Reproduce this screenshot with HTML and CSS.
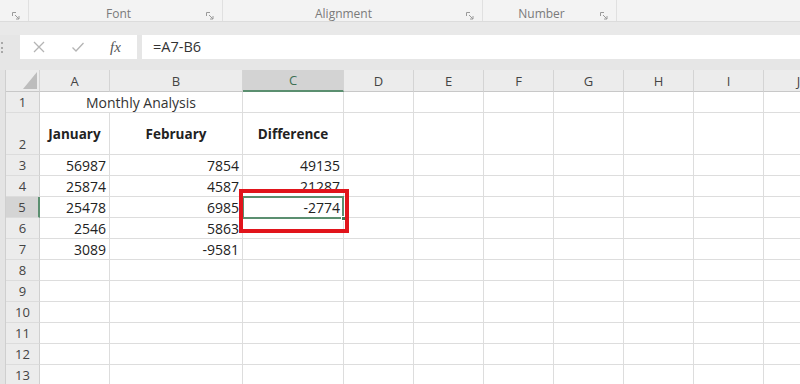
FILE: index.html
```html
<!DOCTYPE html>
<html lang="en">
<head>
    <meta charset="UTF-8">
    <title>Monthly Analysis</title>
    <link rel="stylesheet" href="styles.css">
</head>
<body>
    <div class="ribbon">
        <div class="group group-clip"><span class="launcher"><svg width="8" height="8" viewBox="0 0 8 8"><path d="M0.5 4V0.5H4M3 3l4 4M7 4v3H4" fill="none" stroke="#9a9a9a" stroke-width="1"/></svg></span></div>
        <div class="group group-font"><span class="label">Font</span><span class="launcher"><svg width="8" height="8" viewBox="0 0 8 8"><path d="M0.5 4V0.5H4M3 3l4 4M7 4v3H4" fill="none" stroke="#9a9a9a" stroke-width="1"/></svg></span></div>
        <div class="group group-align"><span class="label">Alignment</span><span class="launcher"><svg width="8" height="8" viewBox="0 0 8 8"><path d="M0.5 4V0.5H4M3 3l4 4M7 4v3H4" fill="none" stroke="#9a9a9a" stroke-width="1"/></svg></span></div>
        <div class="group group-num"><span class="label">Number</span><span class="launcher"><svg width="8" height="8" viewBox="0 0 8 8"><path d="M0.5 4V0.5H4M3 3l4 4M7 4v3H4" fill="none" stroke="#9a9a9a" stroke-width="1"/></svg></span></div>
        <div class="group group-styles"></div>
    </div>

    <div class="band"></div>

    <div class="formula-bar">
        <div class="grip"><span class="dots"></span></div>
        <div class="fbox">
            <svg class="ficon" width="14" height="14" viewBox="0 0 14 14"><path d="M2 2l10 10M12 2L2 12" stroke="#b4b4b4" stroke-width="1.3" fill="none"/></svg>
            <svg class="ficon" width="14" height="14" viewBox="0 0 14 14"><path d="M1.5 7.5l3.5 3.5L12.5 3" stroke="#b4b4b4" stroke-width="1.3" fill="none"/></svg>
            <span class="fx">fx</span>
        </div>
        <div class="finput">=A7-B6</div>
    </div>

    <div class="band-low"></div>

    <div class="frame">
        <div class="edge"></div>
        <div class="sheet" id="sheet">
            <div class="sel-cell"><span class="handle"></span></div>
            <div class="red-box"></div>
        </div>
    </div>

    <script>
        const cols = ['A', 'B', 'C', 'D', 'E', 'F', 'G', 'H', 'I', 'J'];
        const data = {
            3: ['56987', '7854', '49135'],
            4: ['25874', '4587', '21287'],
            5: ['25478', '6985', '-2774'],
            6: ['2546', '5863', ''],
            7: ['3089', '-9581', '']
        };
        const sheet = document.getElementById('sheet');

        function cell(cls, text) {
            const div = document.createElement('div');
            div.className = cls;
            if (text) div.textContent = text;
            sheet.appendChild(div);
            return div;
        }

        // column headers
        const corner = cell('corner');
        corner.innerHTML = '<svg width="14" height="17" viewBox="0 0 14 17"><polygon points="14,0 14,17 0,17" fill="#bdbdbd"/></svg>';
        cols.forEach(c => cell(c === 'C' ? 'col-head active' : 'col-head', c));

        for (let r = 1; r <= 13; r++) {
            let head = 'row-head';
            if (r === 2) head += ' tall';
            if (r === 5) head += ' active';
            cell(head, String(r));

            if (r === 1) {
                cell('cell merged', 'Monthly Analysis');
                for (let i = 2; i < cols.length; i++) cell('cell');
            } else if (r === 2) {
                ['January', 'February', 'Difference'].forEach(t => cell('cell title', t));
                for (let i = 3; i < cols.length; i++) cell('cell');
            } else {
                const vals = data[r] || [];
                cols.forEach((c, i) => cell(vals[i] ? 'cell num' : 'cell', vals[i]));
            }
        }
    </script>
</body>
</html>
```

FILE: styles.css
```css
/* Reset */
* {
    margin: 0;
    padding: 0;
    box-sizing: border-box;
}

body {
    width: 800px;
    height: 384px;
    overflow: hidden;
    background-color: #e6e6e6;
    font-family: 'Open Sans', 'Noto Sans', sans-serif;
    color: #222222;
}

/* Ribbon strip */
.ribbon {
    display: flex;
    height: 22px;
    background-color: #f3f3f3;
    border-bottom: 1px solid #dcdcdc;
}

.group {
    position: relative;
    display: flex;
    justify-content: center;
    align-items: flex-start;
    padding-top: 6px;
    border-right: 1px solid #e0e0e0;
}

.group .label {
    font-size: 12px;
    color: #7a7a7a;
    line-height: 16px;
}

.launcher {
    position: absolute;
    top: 12px;
    right: 8px;
    line-height: 0;
}

.group-clip { width: 29px; }
.group-font { width: 194px; padding-right: 14px; }
.group-align { width: 260px; padding-right: 18px; }
.group-num { width: 134px; padding-right: 16px; }
.group-styles { flex: 1; border-right: none; }

.band {
    height: 13px;
    background-color: #e9e9e9;
}

/* Formula bar */
.formula-bar {
    display: flex;
    height: 24px;
}

.grip {
    width: 20px;
    display: flex;
    align-items: center;
    padding-left: 1px;
}

.dots {
    display: block;
    width: 2px;
    height: 11px;
    border-left: 2px dotted #a8a8a8;
}

.fbox {
    width: 117px;
    background-color: #ffffff;
    display: flex;
    align-items: center;
    gap: 25px;
    padding-left: 12px;
}

.fx {
    font-family: 'Liberation Serif', serif;
    font-style: italic;
    font-size: 15px;
    color: #555555;
    width: 14px;
    line-height: 14px;
}

.finput {
    flex: 1;
    margin-left: 5px;
    background-color: #ffffff;
    padding-left: 11px;
    font-size: 14.5px;
    line-height: 24px;
    color: #333333;
}

.band-low {
    height: 11px;
    background-color: #e6e6e6;
}

/* Worksheet */
.frame {
    display: flex;
    height: 314px;
    overflow: hidden;
}

.edge {
    flex: none;
    width: 6px;
    background-color: #e4e4e4;
    border-right: 1px solid #cfcfcf;
}

.sheet {
    position: relative;
    flex: none;
    display: grid;
    grid-template-columns: 34px 70px 133px 101px 70px 70px 70px 70px 70px 70px 70px;
    grid-template-rows: 22px 21px 42px repeat(11, 21px);
    background-color: #ffffff;
}

.corner,
.col-head,
.row-head {
    background-color: #ececec;
    color: #444444;
    font-size: 13px;
}

.corner {
    display: flex;
    justify-content: flex-end;
    align-items: flex-end;
    padding: 0 2px 2px 0;
    border-right: 1px solid #d4d4d4;
    border-bottom: 1px solid #c8c8c8;
}

.col-head {
    display: flex;
    justify-content: center;
    align-items: center;
    border-right: 1px solid #d4d4d4;
    border-bottom: 1px solid #c8c8c8;
}

.col-head.active {
    background-color: #d3d3d3;
    color: #3e6f53;
    border-bottom: 2px solid #5b8f70;
}

.row-head {
    display: flex;
    justify-content: center;
    align-items: center;
    border-right: 1px solid #d0d0d0;
    border-bottom: 1px solid #dcdcdc;
}

.row-head.tall {
    align-items: flex-end;
    padding-bottom: 1px;
}

.row-head.active {
    background-color: #d4d4d4;
    border-right: 2px solid #5b8f70;
}

.cell {
    display: flex;
    align-items: center;
    padding: 0 3px;
    font-size: 14px;
    border-right: 1px solid #dddddd;
    border-bottom: 1px solid #dddddd;
    white-space: nowrap;
}

.cell.merged {
    grid-column: span 2;
    justify-content: center;
    color: #333333;
}

.cell.title {
    justify-content: center;
    font-weight: bold;
    font-size: 13.5px;
}

.cell.num {
    justify-content: flex-end;
}

/* Selection and highlight overlays */
.sel-cell {
    position: absolute;
    left: 236px;
    top: 126px;
    width: 102px;
    height: 23px;
    border: 2px solid #5b8f70;
}

.handle {
    position: absolute;
    right: -4px;
    bottom: -4px;
    width: 5px;
    height: 5px;
    background-color: #3f7a55;
    border: 1px solid #ffffff;
}

.red-box {
    position: absolute;
    left: 233px;
    top: 119px;
    width: 110px;
    height: 44px;
    border: 4px solid #e1141b;
}
```
